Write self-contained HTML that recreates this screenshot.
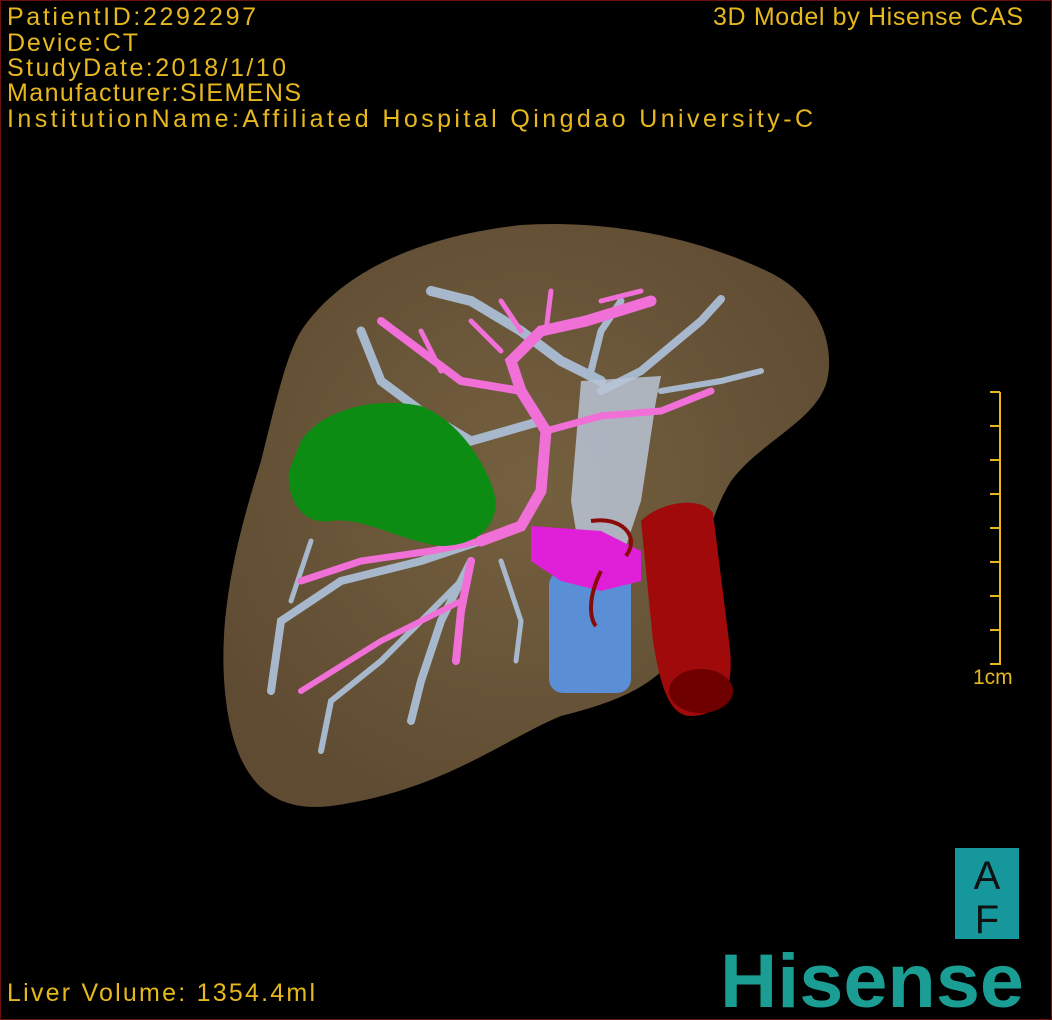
<!DOCTYPE html>
<html><head><style>
html,body{margin:0;padding:0;background:#000;}
.wrap{position:relative;width:1052px;height:1020px;overflow:hidden;background:#000;box-sizing:border-box;border:1px solid #6a1010;}
</style></head><body><div class="wrap">
<svg width="1052" height="1020" style="position:absolute;left:0;top:0">
<defs>
<radialGradient id="lv" cx="0.5" cy="0.45" r="0.6"><stop offset="0" stop-color="#75603f"/><stop offset="1" stop-color="#5e4b32"/></radialGradient>
</defs>
<path d="M300,330 C340,270 420,235 520,224 C610,218 700,238 770,272 C815,295 835,340 826,380 C815,420 760,440 730,480 C705,520 700,570 690,620 C675,680 620,700 560,715 C500,740 440,790 330,805 C270,812 235,780 225,700 C215,620 235,540 260,460 C275,400 285,355 300,330 Z" fill="url(#lv)"/>
<g fill="none" stroke="#a8b8cc" stroke-linecap="round">
<path d="M600,380 L560,360 L520,330 L470,300 L430,290" stroke-width="10"/>
<path d="M600,390 L640,370 L700,320 L720,298" stroke-width="8"/>
<path d="M590,370 L600,330 L620,300" stroke-width="7"/>
<path d="M540,420 L470,440 L420,410 L380,380 L360,330" stroke-width="9"/>
<path d="M480,540 L420,560 L340,580 L280,620 L270,690" stroke-width="8"/>
<path d="M470,560 L440,620 L420,680 L410,720" stroke-width="8"/>
<path d="M460,580 L380,660 L330,700 L320,750" stroke-width="6"/>
<path d="M500,560 L520,620 L515,660" stroke-width="5"/>
<path d="M660,390 L720,380 L760,370" stroke-width="6"/>
<path d="M310,540 L290,600" stroke-width="5"/>
</g>
<path d="M580,380 L660,375 L655,400 L640,500 L620,560 L580,560 L570,500 Z" fill="#b8c4d6" opacity="0.85"/>
<rect x="548" y="570" width="82" height="122" rx="14" fill="#5a8fd6"/>
<path d="M640,520 C660,500 700,495 712,512 L728,640 C735,690 720,715 690,715 C670,715 660,690 652,640 Z" fill="#a00a0a"/>
<ellipse cx="700" cy="690" rx="32" ry="22" fill="#6e0000"/>
<g fill="none" stroke="#f070d8" stroke-linecap="round">
<path d="M480,540 L520,525 L540,490 L545,430 L520,390 L510,360 L540,330 L585,320 L650,300" stroke-width="11"/>
<path d="M520,390 L460,380 L420,350 L380,320" stroke-width="8"/>
<path d="M545,430 L600,415 L660,410 L710,390" stroke-width="7"/>
<path d="M480,540 L430,550 L360,560 L300,580" stroke-width="7"/>
<path d="M470,560 L460,610 L455,660" stroke-width="8"/>
<path d="M460,600 L380,640 L300,690" stroke-width="6"/>
<path d="M500,300 L520,330 M550,290 L545,330 M470,320 L500,350 M600,300 L640,290 M420,330 L440,370" stroke-width="5"/>
</g>
<path d="M530,525 L600,530 L640,550 L640,580 L600,590 L560,580 L530,560 Z" fill="#e020d8"/>
<path d="M300,440 C320,410 370,395 420,405 C460,420 490,470 495,500 C495,530 470,545 440,545 C400,540 360,515 330,520 C300,525 285,495 288,470 Z" fill="#0c8c12"/>
<path d="M590,520 C620,515 640,535 625,555 M600,570 C585,600 590,620 595,625" stroke="#8a0a0a" stroke-width="4" fill="none"/>
<g stroke="#e6b81e" stroke-width="2" fill="none">
<path d="M999,391 V664"/>
<path d="M989,391H999M989,425H999M989,459H999M989,493H999M989,527H999M989,561H999M989,595H999M989,629H999M989,663H999"/>
</g>
<g font-family="Liberation Sans,sans-serif" font-size="25" fill="#e6b81e" lengthAdjust="spacing">
<text x="6" y="24" textLength="249">PatientID:2292297</text>
<text x="6" y="50" textLength="131">Device:CT</text>
<text x="6" y="75" textLength="279">StudyDate:2018/1/10</text>
<text x="6" y="100" textLength="294">Manufacturer:SIEMENS</text>
<text x="6" y="126" textLength="806">InstitutionName:Affiliated Hospital Qingdao University-C</text>
<text x="712" y="24" textLength="310">3D Model by Hisense CAS</text>
<text x="6" y="1000" textLength="308">Liver Volume: 1354.4ml</text>
</g>
<text x="972" y="683" font-family="Liberation Sans,sans-serif" font-size="21" fill="#e6b81e">1cm</text>
<rect x="954" y="847" width="64" height="91" fill="#15979c"/>
<text x="986" y="888" font-family="Liberation Sans,sans-serif" font-size="40" fill="#111" text-anchor="middle">A</text>
<text x="986" y="932" font-family="Liberation Sans,sans-serif" font-size="40" fill="#111" text-anchor="middle">F</text>
<text x="719" y="1006" font-family="Liberation Sans,sans-serif" font-weight="bold" font-size="76" fill="#1a9e94" textLength="304" lengthAdjust="spacingAndGlyphs">Hisense</text>
</svg>
</div></body></html>
